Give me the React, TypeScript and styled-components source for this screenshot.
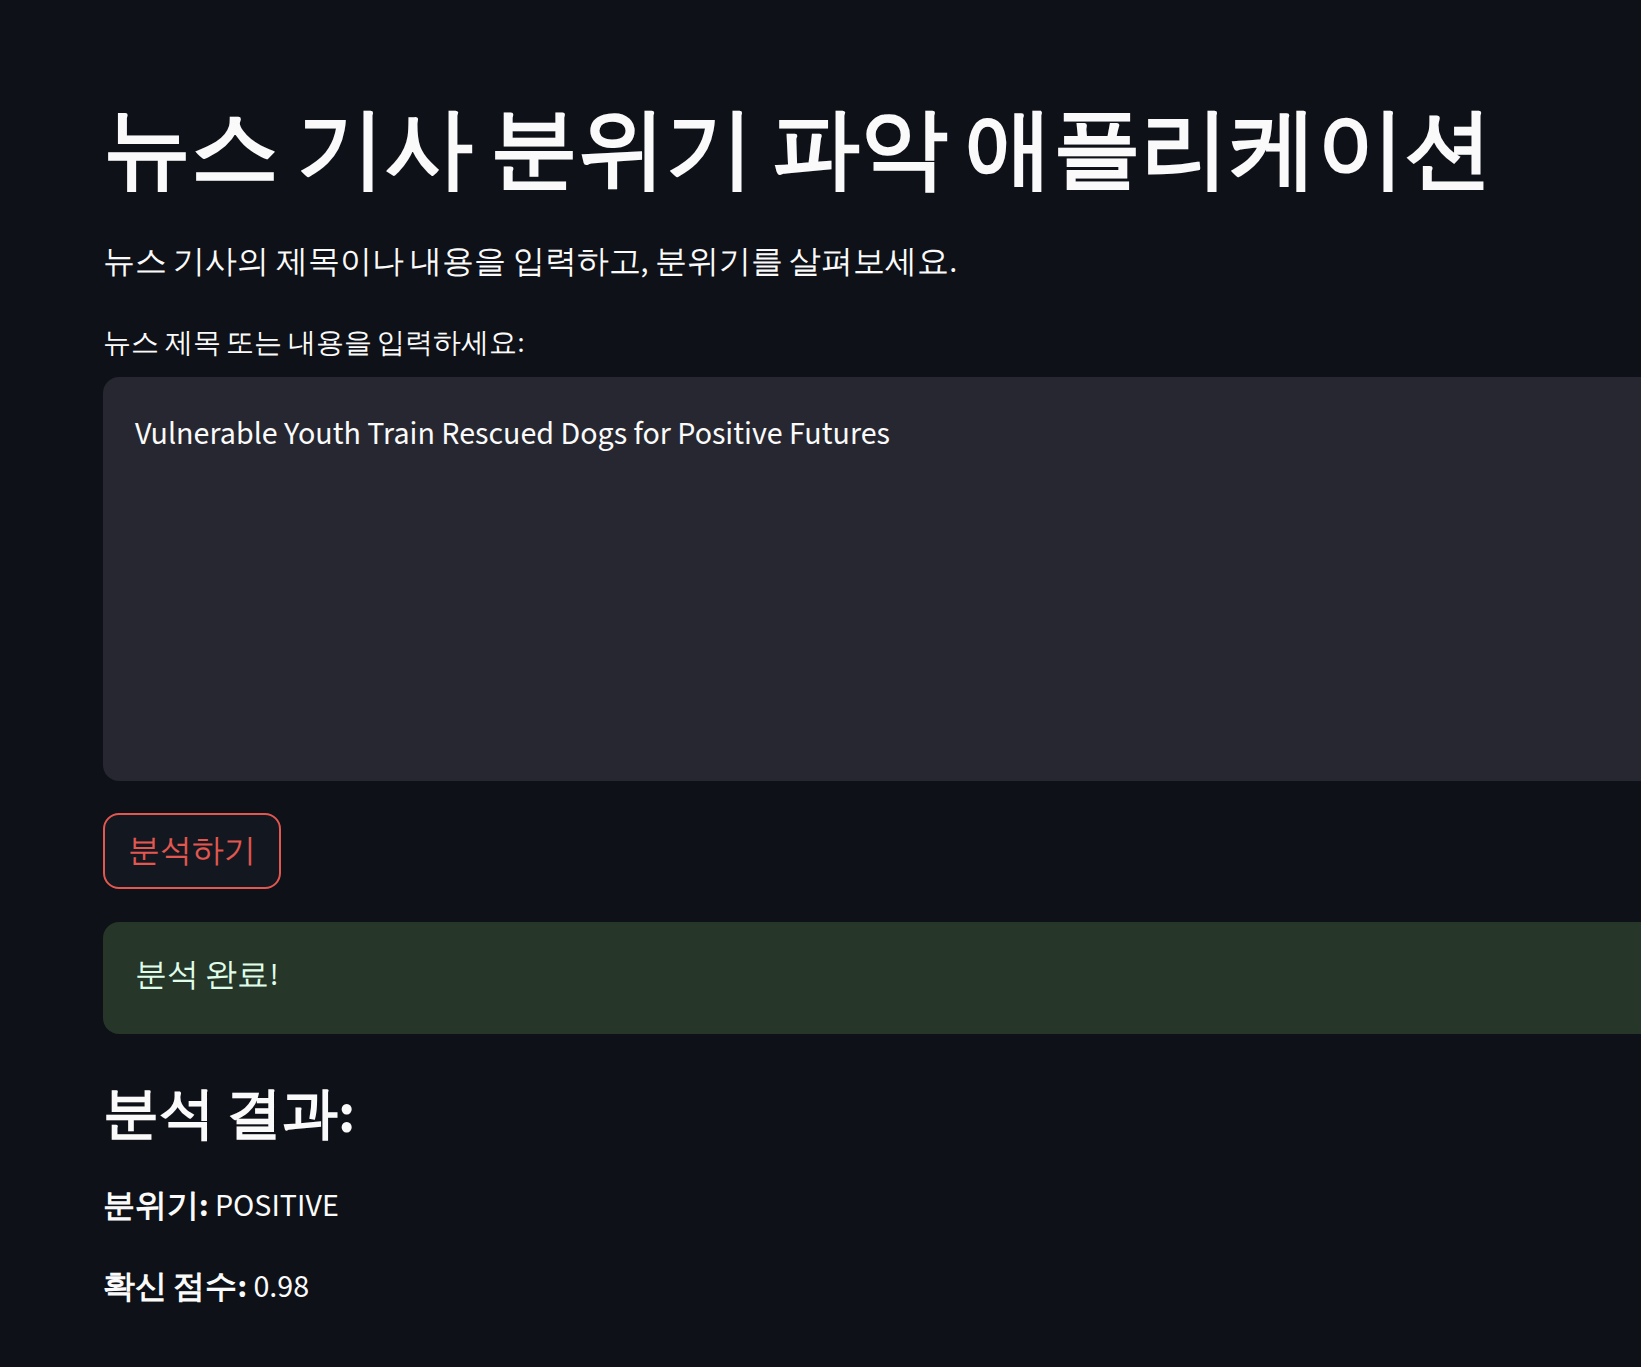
import React from "react";
import styled, { createGlobalStyle } from "styled-components";

const FONT = `"Source Sans 3", sans-serif`;

const GlobalStyle = createGlobalStyle`
  html, body {
    margin: 0;
    padding: 0;
    background: #0e1117;
    overflow: hidden;
  }
  body {
    font-family: ${FONT};
    color: #fafafa;
  }
  * { box-sizing: border-box; }
`;

const Page = styled.main`
  min-height: 1367px;
  background: #0e1117;
  padding: 98px 0 0 103px;
`;

const Block = styled.div`
  width: 1640px;
  display: flex;
  flex-direction: column;
`;

const Title = styled.h1`
  margin: 0;
  font-size: 88px;
  line-height: 106px;
  font-weight: 700;
  color: #fafafa;
  white-space: nowrap;
`;

const Lead = styled.p`
  margin: 32px 0 0;
  font-size: 32px;
  line-height: 52px;
  font-weight: 400;
`;

const Label = styled.label`
  margin-top: 33px;
  font-size: 28px;
  line-height: 44px;
`;

const TextArea = styled.textarea`
  margin-top: 12px;
  height: 404px;
  width: 100%;
  resize: none;
  border: none;
  outline: none;
  border-radius: 16px;
  background: #262730;
  color: #fafafa;
  font-family: ${FONT};
  font-size: 32px;
  line-height: 1.4;
  padding: 35px 32px 30px;
`;

const ButtonRow = styled.div`
  margin-top: 32px;
  display: flex;
`;

const Button = styled.button<{ $accent: string }>`
  height: 76px;
  padding: 0 23px;
  border-radius: 16px;
  border: 2px solid ${(p) => p.$accent};
  background: #131720;
  color: ${(p) => p.$accent};
  font-family: ${FONT};
  font-size: 32px;
  line-height: 1;
  cursor: pointer;
`;

const Alert = styled.div`
  margin-top: 33px;
  height: 112px;
  border-radius: 16px;
  background: #263629;
  color: #dffde9;
  font-size: 32px;
  line-height: 52px;
  padding: 27px 32px 33px;
`;

const SubHeader = styled.h3`
  margin: 47px 0 0;
  font-size: 56px;
  line-height: 67px;
  font-weight: 700;
  color: #fafafa;
`;

const Line = styled.p<{ $gap: number }>`
  margin: ${(p) => p.$gap}px 0 0;
  font-size: 32px;
  line-height: 52px;
`;

const Strong = styled.strong`
  font-weight: 700;
`;

export default function App() {
  return (
    <>
      <GlobalStyle />
      <Page>
        <Block>
          <Title>뉴스 기사 분위기 파악 애플리케이션</Title>
          <Lead>뉴스 기사의 제목이나 내용을 입력하고, 분위기를 살펴보세요.</Lead>
          <Label>뉴스 제목 또는 내용을 입력하세요:</Label>
          <TextArea
            readOnly
            value="Vulnerable Youth Train Rescued Dogs for Positive Futures"
          />
          <ButtonRow>
            <Button $accent="#e2574f">분석하기</Button>
          </ButtonRow>
          <Alert>분석 완료!</Alert>
          <SubHeader>분석 결과:</SubHeader>
          <Line $gap={32}>
            <Strong>분위기:</Strong> POSITIVE
          </Line>
          <Line $gap={29}>
            <Strong>확신 점수:</Strong> 0.98
          </Line>
        </Block>
      </Page>
    </>
  );
}
